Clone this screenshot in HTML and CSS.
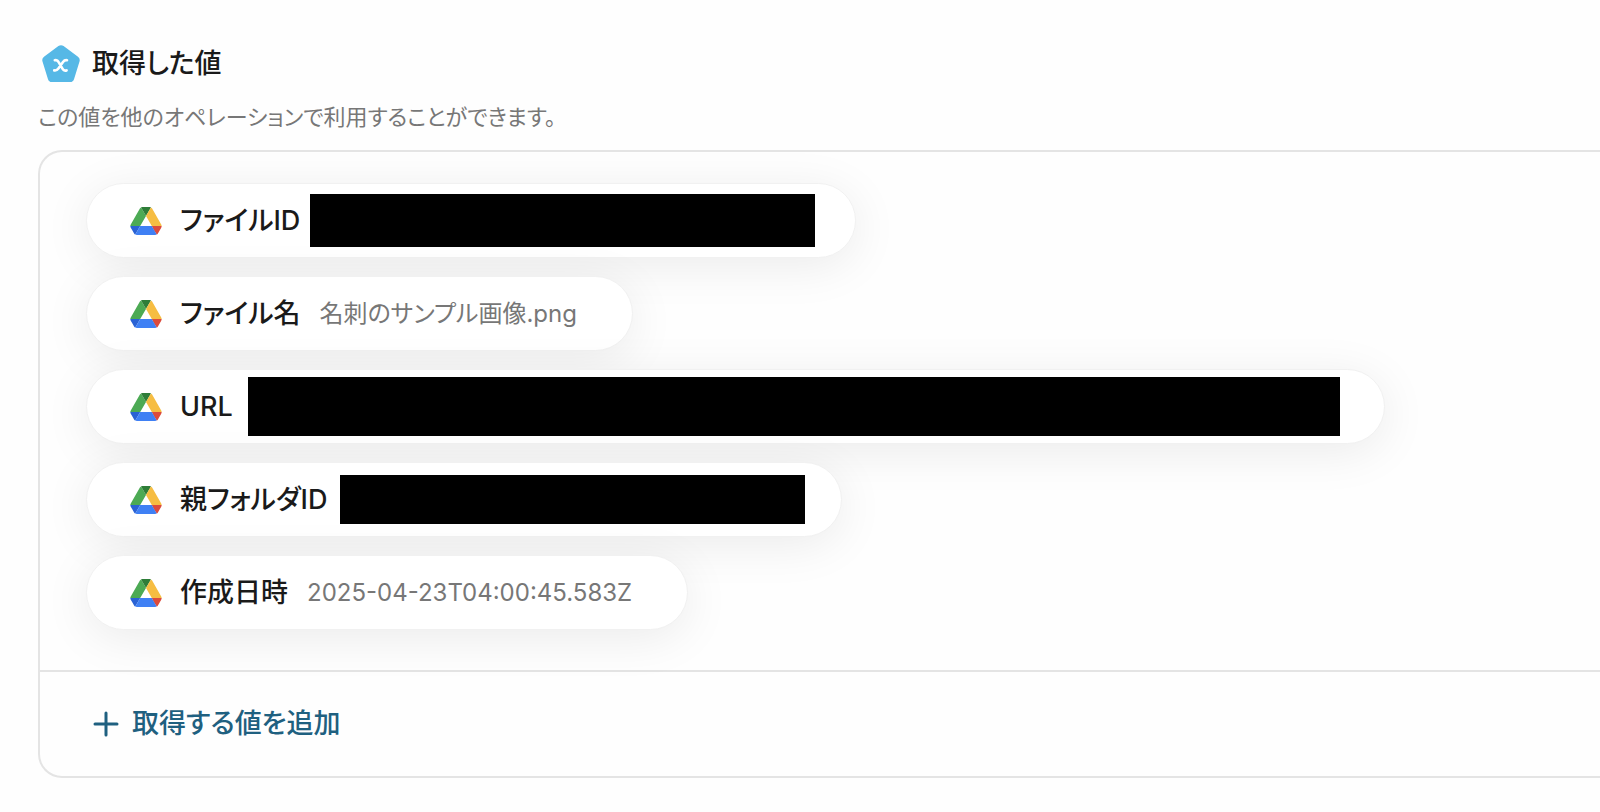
FILE: index.html
```html
<!DOCTYPE html>
<html lang="ja">
<head>
<meta charset="utf-8">
<meta name="viewport" content="width=device-width, initial-scale=1">
<title>取得した値</title>
<link rel="stylesheet" href="styles.css">
</head>
<body>
<svg class="sprite" aria-hidden="true">
  <symbol id="drive" viewBox="0 0 87.3 78">
    <path fill="#2a62d4" d="M6.6 66.85l3.85 6.65c.8 1.4 1.95 2.5 3.3 3.3l13.75-23.8H0c0 1.55.4 3.1 1.2 4.5z"/>
    <path fill="#4caa54" d="M43.65 25L29.9 1.2c-1.35.8-2.5 1.9-3.3 3.3L1.2 48.5A9.06 9.06 0 0 0 0 53h27.5z"/>
    <path fill="#dc4b3c" d="M73.55 76.8c1.35-.8 2.5-1.9 3.3-3.3l1.6-2.75L86.1 57.5c.8-1.4 1.2-2.95 1.2-4.5H59.8l5.85 11.5z"/>
    <path fill="#2e7d38" d="M43.65 25L57.4 1.2C56.05.4 54.5 0 52.9 0H34.4c-1.6 0-3.15.45-4.5 1.2z"/>
    <path fill="#3f80f4" d="M59.8 53H27.5L13.75 76.8c1.35.8 2.9 1.2 4.5 1.2h50.8c1.6 0 3.15-.45 4.5-1.2z"/>
    <path fill="#f6bd42" d="M73.4 26.5L60.7 4.5c-.8-1.4-1.95-2.5-3.3-3.3L43.65 25 59.8 53h27.45c0-1.55-.4-3.1-1.2-4.5z"/>
  </symbol>
</svg>
<main class="outputs">
  <header class="heading">
    <svg class="heading-icon" viewBox="0 0 38 38" aria-hidden="true">
      <path fill="#56b8e6" d="M16.4 1.1Q19 -.5 21.6 1.1L36 11.8Q38.4 13.6 37.5 16.4L32 34.2Q31.1 37 28.2 37H9.8Q6.9 37 6 34.2L.5 16.4Q-.4 13.6 2 11.8Z"/>
      <path fill="none" stroke="#fff" stroke-width="2.6" stroke-linecap="round" d="M12.8 15.2Q15.4 14.6 16.5 16.9L20.6 23.9Q21.8 26.2 24.6 25.4M25 15.2Q22.6 14.8 21 17L16.4 23.6Q14.8 25.9 12.2 25.4"/>
    </svg>
    <h1 class="title">取得した値</h1>
  </header>
  <p class="description">この値を他のオペレーションで利用することができます。</p>
  <section class="panel">
    <ul class="values">
      <li class="pill pill-file-id"><svg class="pill-icon"><use href="#drive"/></svg><span class="label">ファイルID</span><span class="mask" aria-hidden="true"></span></li>
      <li class="pill"><svg class="pill-icon"><use href="#drive"/></svg><span class="label">ファイル名</span><span class="value">名刺のサンプル画像.png</span></li>
      <li class="pill pill-url"><svg class="pill-icon"><use href="#drive"/></svg><span class="label">URL</span><span class="mask" aria-hidden="true"></span></li>
      <li class="pill pill-folder-id"><svg class="pill-icon"><use href="#drive"/></svg><span class="label">親フォルダID</span><span class="mask" aria-hidden="true"></span></li>
      <li class="pill"><svg class="pill-icon"><use href="#drive"/></svg><span class="label">作成日時</span><span class="value">2025-04-23T04:00:45.583Z</span></li>
    </ul>
    <div class="panel-footer">
      <button class="add" type="button">
        <svg class="add-icon" viewBox="0 0 26 26" aria-hidden="true"><path fill="none" stroke="currentColor" stroke-width="3" stroke-linecap="round" d="M13 2v22M2 13h22"/></svg>
        取得する値を追加
      </button>
    </div>
  </section>
</main>
</body>
</html>
```
FILE: styles.css
```css
* {
  box-sizing: border-box;
}

body {
  margin: 0;
  background: #fefefe;
  color: #1a1a1a;
  font-family: Inter, "Noto Sans CJK JP", sans-serif;
  font-size: 27px;
  font-feature-settings: "palt";
  line-height: 40px;
}

.sprite {
  position: absolute;
  width: 0;
  height: 0;
}

.outputs {
  padding: 44px 0 32px 38px;
}

.heading {
  display: flex;
  align-items: center;
  gap: 12px;
  padding-left: 4px;
}

.heading-icon {
  width: 38px;
  height: 38px;
}

.title {
  margin: 0;
  font-size: 27px;
  font-weight: 500;
}

.description {
  margin: 15px 0;
  color: #777;
  font-size: 22px;
  line-height: 36px;
}

.panel {
  border: 2px solid #e4e4e4;
  border-right: 0;
  border-radius: 24px 0 0 24px;
  overflow: hidden;
}

.values {
  display: flex;
  flex-direction: column;
  align-items: flex-start;
  gap: 18px;
  margin: 0;
  padding: 31px 46px 40px;
  list-style: none;
}

.pill {
  display: flex;
  align-items: center;
  height: 75px;
  max-width: 100%;
  padding: 0 55px 0 43px;
  border: 1px solid #f1f1f1;
  border-radius: 38px;
  background: #fff;
  box-shadow: 0 8px 48px rgba(0, 0, 0, 0.08);
}

.pill-icon {
  flex: none;
  width: 32px;
  height: 28px;
  margin-right: 18px;
}

.label {
  flex: none;
  font-weight: 500;
}

.value {
  margin-left: 19px;
  color: #777;
  font-size: 24px;
}

.mask {
  height: 53px;
  background: #000;
}

.pill-file-id {
  padding-right: 40px;
}

.pill-file-id .mask {
  width: 505px;
  margin-left: 10px;
}

.pill-url {
  padding-right: 44px;
}

.pill-url .mask {
  width: 1092px;
  height: 59px;
  margin-left: 15px;
}

.pill-folder-id {
  padding-right: 36px;
}

.pill-folder-id .mask {
  width: 465px;
  height: 49px;
  margin-left: 13px;
}

.panel-footer {
  padding: 32px 53px;
  border-top: 2px solid #e4e4e4;
}

.add {
  display: flex;
  align-items: center;
  gap: 13px;
  padding: 0;
  border: 0;
  background: none;
  color: #1f6080;
  font: inherit;
  font-weight: 500;
  font-feature-settings: inherit;
  cursor: pointer;
}

.add-icon {
  width: 26px;
  height: 26px;
}
```
